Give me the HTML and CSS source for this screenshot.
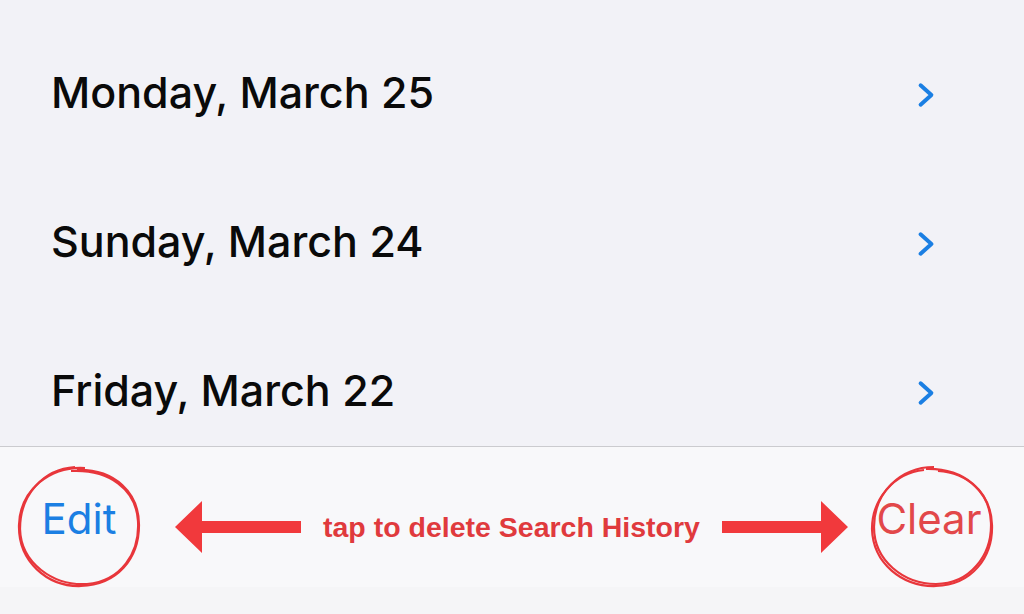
FILE: index.html
```html
<!DOCTYPE html>
<html lang="en">
<head>
  <meta charset="UTF-8">
  <meta name="viewport" content="width=device-width, initial-scale=1.0">
  <title>History</title>
  <link rel="stylesheet" href="styles.css">
</head>
<body>
  <div class="screen">
    <div class="list">
      <div class="row">
        <span class="day">Monday, March 25</span>
        <svg class="chevron" viewBox="0 0 16 24"><path d="M3 3 L13 12 L3 21"/></svg>
      </div>
      <div class="row">
        <span class="day">Sunday, March 24</span>
        <svg class="chevron" viewBox="0 0 16 24"><path d="M3 3 L13 12 L3 21"/></svg>
      </div>
      <div class="row">
        <span class="day">Friday, March 22</span>
        <svg class="chevron" viewBox="0 0 16 24"><path d="M3 3 L13 12 L3 21"/></svg>
      </div>
    </div>

    <div class="toolbar">
      <div class="mark edit">
        <span class="btn-text">Edit</span>
        <svg class="ring" viewBox="0 0 124 124">
          <path d="M68 3 C34 1 3 24 2 60 C1 96 30 122 64 121 C100 120 122 94 122 60 C122 28 98 4 60 5"/>
          <path d="M58 2 C26 4 3 30 3 64 C4 98 36 121 70 119 C104 116 123 88 121 56 C119 24 92 4 54 6"/>
        </svg>
      </div>

      <svg class="arrow left" viewBox="0 0 126 52"><path d="M0 26 L27 0 L27 20 L126 20 L126 32 L27 32 L27 52 Z"/></svg>

      <span class="note">tap to delete Search History</span>

      <svg class="arrow right" viewBox="0 0 126 52"><path d="M126 26 L99 0 L99 20 L0 20 L0 32 L99 32 L99 52 Z"/></svg>

      <div class="mark clear">
        <span class="btn-text">Clear</span>
        <svg class="ring" viewBox="0 0 124 124">
          <path d="M54 5 C24 8 2 34 2 64 C3 98 32 122 66 121 C102 120 123 92 122 60 C121 26 94 3 56 4"/>
          <path d="M64 2 C30 2 4 28 4 62 C4 96 34 119 66 119 C100 119 122 90 121 58 C120 28 98 8 68 6"/>
        </svg>
      </div>
    </div>
    <div class="home-strip"></div>
  </div>
</body>
</html>
```

FILE: styles.css
```css
*,*::before,*::after{
  margin: 0;
  padding: 0;
  box-sizing: border-box;
}
body{
  width: 1024px;
  height: 614px;
  overflow: hidden;
  background: #f2f2f7;
  font-family: Inter, "Liberation Sans", sans-serif;
}

.screen{
  display: flex;
  flex-direction: column;
  height: 614px;
}

.list{
  height: 446px;
  overflow: hidden;
  padding-top: 17px;
  background: #f2f2f7;
}
.list .row{
  height: 149px;
  display: flex;
  align-items: center;
  justify-content: space-between;
  padding: 0 89px 0 51px;
  flex-shrink: 0;
}
.row .day{
  font-size: 43px;
  font-weight: 500;
  color: #0a0a0a;
}
.row .chevron{
  width: 18px;
  height: 26px;
  fill: none;
  stroke: #1b7fe3;
  stroke-width: 3.6;
  stroke-linecap: round;
  stroke-linejoin: round;
  margin-top: 6px;
}

.toolbar{
  height: 141px;
  border-top: 1px solid #cbcbcf;
  background: #f8f8fa;
  display: flex;
  align-items: center;
  padding: 20px 0 0 17px;
}
.home-strip{
  flex: 1;
  background: #f5f5f7;
}

.mark{
  position: relative;
  width: 124px;
  height: 124px;
  display: flex;
  align-items: center;
  justify-content: center;
  flex-shrink: 0;
}
.mark .btn-text{
  font-size: 42px;
  font-weight: 400;
  margin-top: -18px;
}
.edit .btn-text{
  color: #1b7fe3;
}
.clear .btn-text{
  color: #e2484a;
  margin-left: -6px;
}
.mark .ring{
  position: absolute;
  inset: 0;
  width: 100%;
  height: 100%;
  fill: none;
  stroke: #e8363b;
  stroke-width: 2.2;
}

.arrow{
  width: 126px;
  height: 52px;
  fill: #f1393c;
  flex-shrink: 0;
}
.arrow.left{
  margin-left: 34px;
}
.arrow.right{
  margin-left: 22px;
}
.note{
  margin-left: 22px;
  font-family: "Liberation Sans", Arial, sans-serif;
  font-weight: 700;
  font-size: 28.5px;
  color: #e03a3d;
  white-space: nowrap;
}
.clear{
  margin-left: 22px;
}
```
